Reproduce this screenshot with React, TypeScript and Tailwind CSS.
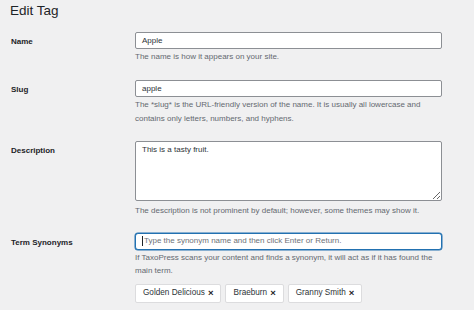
import React from "react";

const font = { fontFamily: '"Liberation Sans", Arial, sans-serif' };

function Label({ children }: { children: React.ReactNode }) {
  return (
    <div className="w-[135px] shrink-0 pl-[11px] pt-[3px] text-[8px] font-bold leading-[13.5px] text-[#1d2327]">
      {children}
    </div>
  );
}

function Help({ children }: { children: React.ReactNode }) {
  return <p className="mt-px text-[8px] leading-[13.5px] text-[#646970]">{children}</p>;
}

function Tag({ name }: { name: string }) {
  return (
    <div className="flex h-[19px] items-center gap-[3px] rounded-[2px] border border-[#dcdcde] bg-white px-[7px] text-[8.2px] text-[#2c3338]">
      <span>{name}</span>
      <span className="text-[9.5px] font-bold leading-none text-[#1d2327]">×</span>
    </div>
  );
}

export default function App() {
  return (
    <div className="h-[310px] w-[474px] overflow-hidden bg-[#f0f0f1]" style={font}>
      <h1 className="pl-[10px] pt-[2px] text-[13.5px] font-normal leading-[18px] text-[#1d2327]">Edit Tag</h1>

      <div className="mt-[12px] flex">
        <Label>Name</Label>
        <div className="w-[307px]">
          <div className="flex h-[17px] items-center rounded-[2px] border border-[#8c8f94] bg-white px-[6px] text-[8px] text-[#2c3338]">
            Apple
          </div>
          <Help>The name is how it appears on your site.</Help>
        </div>
      </div>

      <div className="mt-[16.5px] flex">
        <Label>Slug</Label>
        <div className="w-[307px]">
          <div className="flex h-[17px] items-center rounded-[2px] border border-[#8c8f94] bg-white px-[6px] text-[8px] text-[#2c3338]">
            apple
          </div>
          <Help>
            The *slug* is the URL-friendly version of the name. It is usually all lowercase and contains only
            letters, numbers, and hyphens.
          </Help>
        </div>
      </div>

      <div className="mt-[15.5px] flex">
        <Label>Description</Label>
        <div className="w-[307px]">
          <textarea
            defaultValue="This is a tasty fruit."
            className="block h-[60px] w-[307px] resize-y rounded-[2px] border border-[#8c8f94] bg-white px-[6px] py-[2px] text-[8px] leading-[12px] text-[#2c3338] outline-none"
            style={font}
          />
          <p className="mt-[3px] text-[8px] leading-[13.5px] text-[#646970]">
            The description is not prominent by default; however, some themes may show it.
          </p>
        </div>
      </div>

      <div className="mt-[15.5px] flex">
        <Label>Term Synonyms</Label>
        <div className="w-[307px]">
          <div className="flex h-[17px] items-center rounded-[3px] border border-[#2271b1] bg-white px-[6px] text-[8px] text-[#6e7277] shadow-[0_0_0_0.5px_#2271b1]">
            <span className="mr-px h-[10px] w-px bg-[#1d2327]" />
            Type the synonym name and then click Enter or Return.
          </div>
          <Help>
            If TaxoPress scans your content and finds a synonym, it will act as if it has found the main term.
          </Help>
          <div className="mt-[6px] flex gap-[4px]">
            <Tag name="Golden Delicious" />
            <Tag name="Braeburn" />
            <Tag name="Granny Smith" />
          </div>
        </div>
      </div>
    </div>
  );
}
